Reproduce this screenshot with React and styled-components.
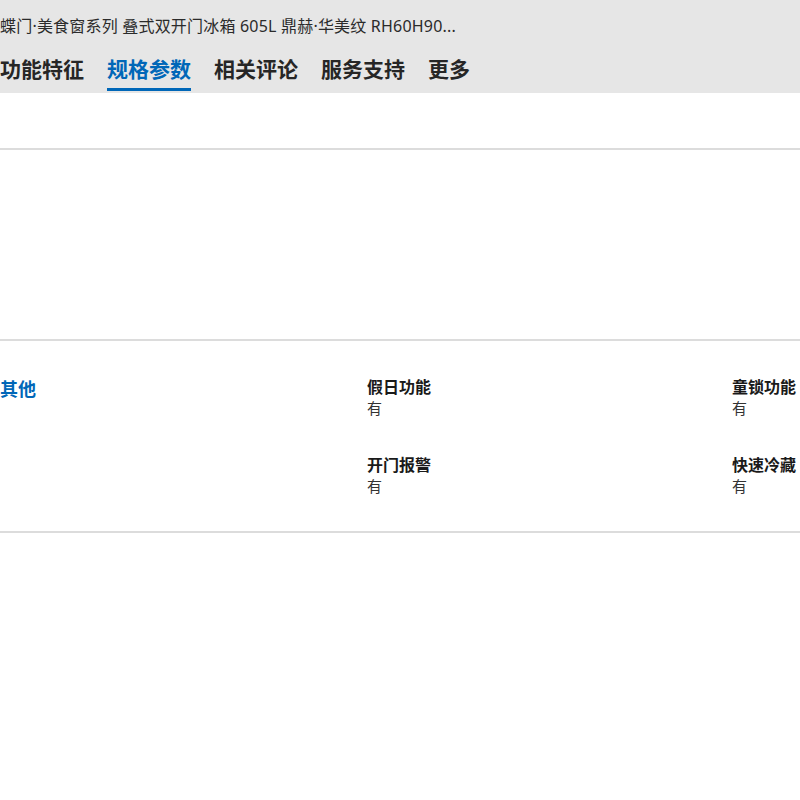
import React from 'react'
import styled, { createGlobalStyle } from 'styled-components'

const GlobalStyle = createGlobalStyle`
  html, body {
    margin: 0;
    padding: 0;
    background: #ffffff;
  }
  body {
    font-family: "Noto Sans CJK SC", "Noto Sans", sans-serif;
    color: #222;
  }
`;

const Page = styled.div`
  width: 800px;
  height: 800px;
  overflow: hidden;
`;

const Header = styled.div`
  background: #e6e6e6;
  height: 93px;
  box-sizing: border-box;
  padding-top: 16px;
`;

const ProductTitle = styled.div`
  font-family: "Noto Sans", "Noto Sans CJK SC", sans-serif;
  font-size: 16px;
  line-height: 20px;
  letter-spacing: 0.2px;
  color: #2b2b2b;
  white-space: nowrap;
`;

const Tabs = styled.div`
  display: flex;
  gap: 23px;
  margin-top: 18px;
`;

const Tab = styled.div`
  font-size: 21px;
  line-height: 28px;
  font-weight: 700;
  color: ${p => (p.active ? '#0067b8' : '#262626')};
  padding-bottom: 6px;
  border-bottom: 3px solid ${p => (p.active ? '#0067b8' : 'transparent')};
`;

const Divider = styled.div`
  height: 2px;
  background: #dcdcdc;
`;

const Spacer = styled.div`
  height: ${p => p.h}px;
`;

const SpecSection = styled.div`
  display: grid;
  grid-template-columns: 367px 365px 365px;
  padding: 34px 0;
`;

const Category = styled.div`
  font-size: 18px;
  line-height: 26px;
  font-weight: 700;
  color: #0067b8;
`;

const SpecGrid = styled.div`
  grid-column: 2 / span 2;
  display: grid;
  grid-template-columns: 365px 365px;
  row-gap: 34px;
`;

const SpecItem = styled.div`
  display: flex;
  flex-direction: column;
`;

const SpecLabel = styled.div`
  font-size: 16px;
  line-height: 22px;
  font-weight: 700;
  color: #1a1a1a;
  white-space: nowrap;
`;

const SpecValue = styled.div`
  font-size: 15px;
  line-height: 22px;
  color: #333;
`;

const tabs = ['功能特征', '规格参数', '相关评论', '服务支持', '更多']

const specs = [
  { label: '假日功能', value: '有' },
  { label: '童锁功能', value: '有' },
  { label: '开门报警', value: '有' },
  { label: '快速冷藏', value: '有' },
]

export default function App() {
  return (
    <Page>
      <GlobalStyle />
      <Header>
        <ProductTitle>蝶门·美食窗系列 叠式双开门冰箱 605L 鼎赫·华美纹 RH60H90...</ProductTitle>
        <Tabs>
          {tabs.map(t => (
            <Tab key={t} active={t === '规格参数'}>{t}</Tab>
          ))}
        </Tabs>
      </Header>
      <Spacer h={55} />
      <Divider />
      <Spacer h={189} />
      <Divider />
      <SpecSection>
        <Category>其他</Category>
        <SpecGrid>
          {specs.map(s => (
            <SpecItem key={s.label}>
              <SpecLabel>{s.label}</SpecLabel>
              <SpecValue>{s.value}</SpecValue>
            </SpecItem>
          ))}
        </SpecGrid>
      </SpecSection>
      <Divider />
    </Page>
  )
}
